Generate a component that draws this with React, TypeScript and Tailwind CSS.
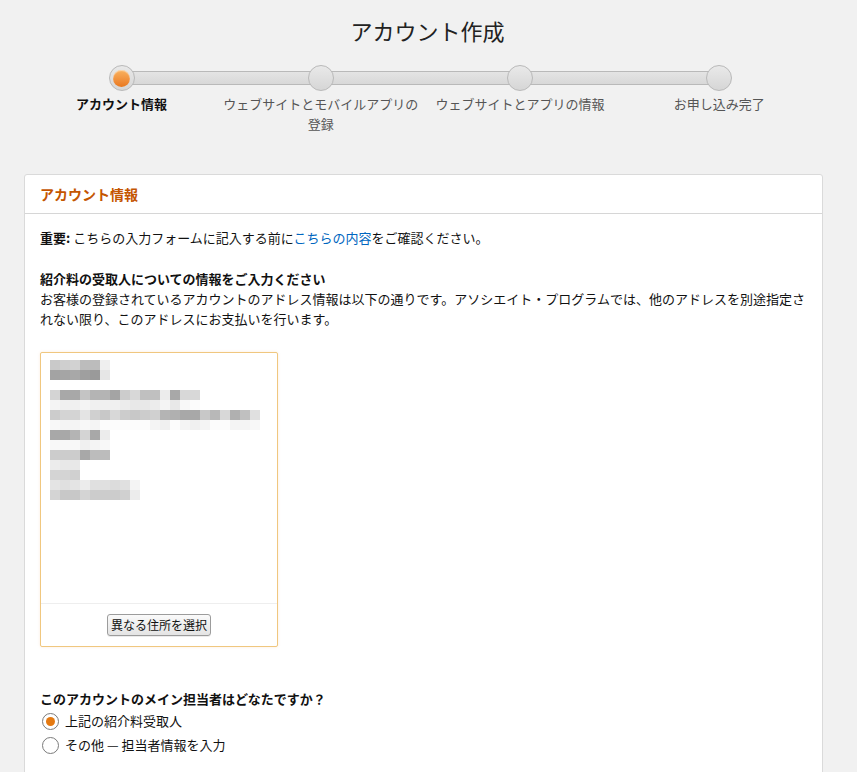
import React from 'react';

const FONT = '"Noto Sans CJK JP", "Noto Sans", "Liberation Sans", sans-serif';

const steps = [
  { label: 'アカウント情報', active: true },
  { label: 'ウェブサイトとモバイルアプリの登録', active: false },
  { label: 'ウェブサイトとアプリの情報', active: false },
  { label: 'お申し込み完了', active: false },
];

// mosaic that hides the registered address (10px blocks)
const addressMosaic: string[][] = [
  ['c9', 'cf', 'd2', 'bc', 'bc', 'ef'],
  ['a3', 'a5', 'a8', '9f', '9a', 'e6'],
  [],
  ['d4', 'a8', 'a8', 'c4', 'b4', 'b4', 'a4', 'cc', 'd8', 'c0', 'c0', 'ec', 'a8', 'd8', 'd8'],
  ['f4', 'f0', 'f0', 'f4', 'f0', 'f0', 'f0', 'ec', 'e8', 'e8', 'ec', 'f4', 'e8', 'f8', 'fc'],
  ['cc', 'd4', 'd4', 'e4', 'd0', 'c8', 'd8', 'cc', 'c8', 'cc', 'd0', 'b4', 'b0', 'a8', 'a8', 'c8', 'b8', 'd8', 'b0', 'c0', 'e0'],
  ['f8', 'f4', 'f4', 'f8', 'f4', 'fc', 'fc', 'fc', 'fc', 'fc', 'f4', 'f0', 'fc', 'f4', 'f0', 'f4', 'fc', 'fc', 'f4', 'f4', 'f8'],
  ['a8', 'a8', 'b4', 'd4', 'a8', 'ec'],
  ['f8', 'f8', 'f8', 'f0', 'f4', 'f8'],
  ['cc', 'cc', 'cc', 'a8', 'bc', 'bc'],
  ['ec', 'e8', 'e8'],
  ['d4', 'd4', 'd0'],
  ['e4', 'e0', 'e4', 'ec', 'e0', 'e0', 'dc', 'e0', 'f4'],
  ['d4', 'c8', 'c8', 'd4', 'cc', 'cc', 'cc', 'd0', 'ec'],
];

function AddressMosaic() {
  return (
    <svg width="210" height="140" viewBox="0 0 210 140">
      {addressMosaic.map((row, y) =>
        row.map((v, x) => (
          <rect key={`${y}-${x}`} x={x * 10} y={y * 10} width="10" height="10" fill={`#${v}${v}${v}`} />
        ))
      )}
    </svg>
  );
}

function StepDot({ active }: { active: boolean }) {
  return (
    <div className="relative z-10 flex h-[26px] w-[26px] items-center justify-center rounded-full border border-[#b9b9b9] bg-gradient-to-b from-[#e9e9e9] to-[#d6d6d6]">
      {active && (
        <div className="h-[17px] w-[17px] rounded-full bg-gradient-to-b from-[#f9b25e] to-[#e9781c] shadow-[inset_0_1px_1px_rgba(255,255,255,0.5)]" />
      )}
    </div>
  );
}

function Radio({ checked, children }: { checked: boolean; children: React.ReactNode }) {
  return (
    <label className="flex h-6 items-center gap-[6px]">
      <span className="flex h-[17px] w-[17px] items-center justify-center rounded-full border border-[#7b7b7b] bg-white">
        {checked && <span className="h-[9px] w-[9px] rounded-full bg-[#e47911]" />}
      </span>
      <span>{children}</span>
    </label>
  );
}

export default function App() {
  return (
    <div className="min-h-screen bg-[#f1f1f1] text-[#111] overflow-hidden" style={{ fontFamily: FONT }}>
      <h1 className="pt-[15px] pr-[2px] text-center text-[22px] leading-[30px] text-[#222]">アカウント作成</h1>

      {/* progress steps */}
      <div className="relative ml-[22px] mt-[20px] w-[797px]">
        <div className="absolute left-[100px] right-[100px] top-[6px] h-[14px] rounded-full border border-[#b9b9b9] bg-gradient-to-b from-[#e4e4e4] to-[#d8d8d8]" />
        <div className="grid grid-cols-4">
          {steps.map((s) => (
            <div key={s.label} className="flex flex-col items-center">
              <StepDot active={s.active} />
              <div
                className={`mt-[3px] text-center text-[13px] leading-[20px] ${
                  s.active ? 'font-bold text-[#111]' : 'text-[#555]'
                }`}
              >
                {s.label}
              </div>
            </div>
          ))}
        </div>
      </div>

      {/* account info card */}
      <div className="ml-[24px] mt-[40px] w-[799px] rounded-t-[3px] border border-[#dadada] bg-white">
        <div className="flex h-[39px] items-center border-b border-[#d6d6d6] px-[15px] text-[14px] font-bold text-[#c45500]">
          アカウント情報
        </div>
        <div className="px-[15px] pt-[14px] pb-10 text-[13px] leading-[20px]">
          <p>
            <span className="font-bold">重要:</span> こちらの入力フォームに記入する前に
            <span className="text-[#0066c0]">こちらの内容</span>をご確認ください。
          </p>

          <h2 className="mt-[21px] font-bold">紹介料の受取人についての情報をご入力ください</h2>
          <p>
            お客様の登録されているアカウントのアドレス情報は以下の通りです。アソシエイト・プログラムでは、他のアドレスを別途指定されない限り、このアドレスにお支払いを行います。
          </p>

          <div className="mt-[23px] flex h-[295px] w-[238px] flex-col rounded-[2px] border border-[#f0c77f] bg-white shadow-[0_0_3px_rgba(228,121,17,0.15)]">
            <div className="flex-1 pl-[9px] pt-[7px]">
              <AddressMosaic />
            </div>
            <div className="flex h-[43px] items-center justify-center border-t border-[#eeeeee]">
              <button className="h-[22px] rounded-[3px] border border-[#9c9c9c] bg-gradient-to-b from-[#fafafa] to-[#e4e4e4] px-[3px] text-[12px] leading-[20px] text-[#111] shadow-[0_1px_0_rgba(0,0,0,0.08)]">
                異なる住所を選択
              </button>
            </div>
          </div>

          <h2 className="mt-[42px] font-bold">このアカウントのメイン担当者はどなたですか？</h2>
          <div className="ml-[2px] flex flex-col">
            <Radio checked>上記の紹介料受取人</Radio>
            <Radio checked={false}>その他 — 担当者情報を入力</Radio>
          </div>
        </div>
      </div>
    </div>
  );
}
